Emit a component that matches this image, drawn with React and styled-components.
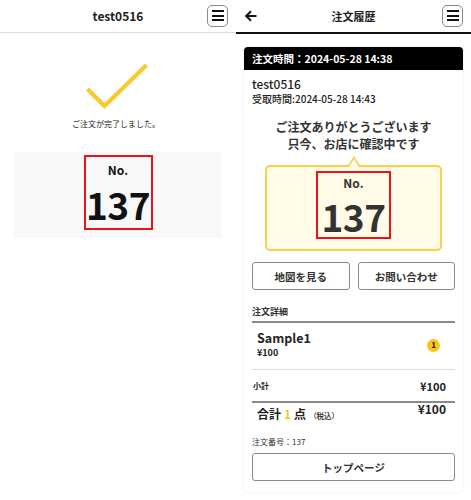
import React from "react";
import styled, { createGlobalStyle } from "styled-components";

const Global = createGlobalStyle`
  html, body { margin: 0; padding: 0; background: #fff; }
  body { font-family: "Noto Sans CJK JP", "Noto Sans", sans-serif; color: #222; }
  * { box-sizing: border-box; }
`;

const Page = styled.div`
  display: flex;
  width: 471px;
  height: 500px;
`;

const Panel = styled.div`
  width: ${(p) => p.$w}px;
  flex-shrink: 0;
  display: flex;
  flex-direction: column;
`;

const Header = styled.header`
  height: ${(p) => (p.$dark ? 34 : 33)}px;
  display: grid;
  grid-template-columns: 1fr auto 1fr;
  align-items: center;
  padding: 0 8px;
  border-bottom: ${(p) => (p.$dark ? "2px solid #111" : "1px solid #dcdcdc")};
`;

const Title = styled.h1`
  grid-column: 2;
  margin: 0;
  font-size: ${(p) => p.$size || 12}px;
  font-weight: 700;
  color: #222;
  line-height: 1;
`;

const BackButton = styled.button`
  grid-column: 1;
  justify-self: start;
  border: 0;
  background: none;
  padding: 0;
  width: 14px;
  height: 14px;
  display: flex;
`;

const MenuButton = styled.button`
  grid-column: 3;
  justify-self: end;
  width: 21px;
  height: 22px;
  border: 1px solid #888;
  border-radius: 5px;
  background: #fff;
  padding: 0;
  display: flex;
  flex-direction: column;
  align-items: center;
  justify-content: center;
  gap: 2.5px;
  margin-top: -1px;
`;

const Bar = styled.span`
  display: block;
  width: 12px;
  height: 2px;
  background: #111;
`;

const Menu = () => (
  <MenuButton>
    <Bar />
    <Bar />
    <Bar />
  </MenuButton>
);

/* left */
const Done = styled.div`
  display: flex;
  flex-direction: column;
  align-items: center;
  padding-top: 28px;
`;

const CheckSvg = styled.svg`
  display: block;
  margin-left: -2px;
`;

const DoneText = styled.p`
  margin: 7px 0 0;
  font-size: 8px;
  line-height: 12px;
  color: #222;
  margin-left: -4px;
`;

const GreyBox = styled.div`
  margin: 22px 14px 0 14px;
  height: 86px;
  background: #f8f8f8;
  display: flex;
  justify-content: center;
  padding-top: 3px;
`;

const NoBox = styled.div`
  width: ${(p) => p.$w}px;
  height: ${(p) => p.$h}px;
  border: 2px solid #e8141b;
  display: flex;
  flex-direction: column;
  align-items: center;
  color: ${(p) => p.$color};
`;

const NoLabel = styled.div`
  font-size: 12px;
  font-weight: 700;
  line-height: 14px;
  margin-top: ${(p) => p.$mt}px;
`;

const NoValue = styled.div`
  font-size: 37px;
  font-weight: 700;
  line-height: 37px;
  margin-top: ${(p) => p.$mt}px;
  letter-spacing: -0.5px;
`;

/* right */
const RightBody = styled.div`
  padding: 13px 8px 0;
`;

const Card = styled.div`
  border-radius: 4px;
  background: #fff;
  box-shadow: 0 0 3px rgba(0, 0, 0, 0.09);
  padding-bottom: 11px;
`;

const CardHead = styled.div`
  height: 23px;
  background: #000;
  color: #fff;
  border-radius: 4px 4px 0 0;
  font-size: 10.5px;
  font-weight: 700;
  display: flex;
  align-items: center;
  padding-left: 8px;
`;

const CardInner = styled.div`
  padding: 0 8px;
  display: flex;
  flex-direction: column;
`;

const Shop = styled.div`
  margin-top: 6px;
  font-size: 12px;
  font-weight: 500;
  line-height: 16px;
  color: #222;
`;

const Pickup = styled.div`
  font-size: 10px;
  font-weight: 500;
  line-height: 14px;
  color: #222;
`;

const Thanks = styled.div`
  margin-top: 12px;
  text-align: center;
  font-size: 12px;
  font-weight: 700;
  line-height: 17px;
  color: #333;
`;

const Bubble = styled.div`
  position: relative;
  margin: 13px 13px 0;
  border: 2px solid #f5d24e;
  border-radius: 5px;
  background: #fffbe6;
  display: flex;
  justify-content: center;
  padding: 4px 0 10px;

  &::before,
  &::after {
    content: "";
    position: absolute;
    left: 50%;
    transform: translateX(-50%);
    width: 0;
    height: 0;
    border-left: 7px solid transparent;
    border-right: 7px solid transparent;
  }
  &::before {
    top: -11px;
    border-bottom: 11px solid #f5d24e;
  }
  &::after {
    top: -8px;
    border-left-width: 5px;
    border-right-width: 5px;
    border-bottom: 8px solid #fffbe6;
  }
`;

const ButtonRow = styled.div`
  margin-top: 11px;
  display: grid;
  grid-template-columns: 1fr 1fr;
  gap: 8px;
`;

const OutlineButton = styled.button`
  height: 28px;
  border: 1.5px solid #8a8a8a;
  border-radius: 3px;
  background: #fff;
  font-family: inherit;
  font-size: 10.5px;
  font-weight: 700;
  color: #333;
  padding: 0;
  margin-top: ${(p) => p.$mt || 0}px;
`;

const SectionTitle = styled.div`
  margin-top: 15px;
  font-size: 9px;
  font-weight: 700;
  line-height: 14px;
  padding-bottom: 2px;
  border-bottom: 2px solid #8a8a8a;
  color: #333;
`;

const ItemRow = styled.div`
  display: flex;
  align-items: center;
  justify-content: space-between;
  padding: 7px 15px 9px 5px;
  border-bottom: 1px solid #dcdcdc;
`;

const ItemName = styled.div`
  font-size: 12.5px;
  font-weight: 700;
  line-height: 16px;
  color: #222;
`;

const ItemPrice = styled.div`
  font-size: 9px;
  font-weight: 700;
  line-height: 14px;
  color: #222;
`;

const Badge = styled.span`
  width: 13px;
  height: 13px;
  border-radius: 50%;
  background: #f7c51f;
  font-size: 8px;
  font-weight: 700;
  color: #222;
  display: flex;
  align-items: center;
  justify-content: center;
  line-height: 1;
`;

const SubRow = styled.div`
  display: flex;
  align-items: center;
  justify-content: space-between;
  height: 33px;
  padding: 0 9px 0 1px;
  border-bottom: 2px solid #8a8a8a;
`;

const SubLabel = styled.span`
  font-size: 8px;
  font-weight: 700;
  color: #222;
`;

const Price = styled.span`
  font-size: ${(p) => p.$size}px;
  font-weight: 700;
  line-height: 12px;
  color: #222;
`;

const TotalRow = styled.div`
  display: flex;
  align-items: flex-start;
  justify-content: space-between;
  padding: 0 9px 0 5px;
`;

const TotalLabel = styled.div`
  padding-top: 3px;
  font-size: 12px;
  font-weight: 700;
  line-height: 16px;
  color: #222;
`;

const Accent = styled.span`
  color: #f7c51f;
  margin: 0 3px;
`;

const Tax = styled.span`
  font-size: 7.5px;
  font-weight: 500;
  margin-left: 3px;
`;

const OrderNo = styled.div`
  margin-top: 12px;
  font-size: 8px;
  line-height: 12px;
  color: #333;
`;

export default function App() {
  return (
    <>
      <Global />
      <Page>
        <Panel $w={236}>
          <Header>
            <Title $size={12}>test0516</Title>
            <Menu />
          </Header>
          <Done>
            <CheckSvg width="64" height="50" viewBox="0 0 64 50">
              <polyline
                points="2.5,28 19.5,45 61.5,4"
                fill="none"
                stroke="#f7cb2b"
                strokeWidth="4.2"
              />
            </CheckSvg>
            <DoneText>ご注文が完了しました。</DoneText>
          </Done>
          <GreyBox>
            <NoBox $w={69} $h={75} $color="#111">
              <NoLabel $mt={6}>No.</NoLabel>
              <NoValue $mt={9}>137</NoValue>
            </NoBox>
          </GreyBox>
        </Panel>
        <Panel $w={235}>
          <Header $dark>
            <BackButton>
              <svg width="14" height="14" viewBox="0 0 14 14">
                <path
                  d="M12.5 7H2.5M7 2.2L2.2 7 7 11.8"
                  fill="none"
                  stroke="#111"
                  strokeWidth="2"
                />
              </svg>
            </BackButton>
            <Title $size={11}>注文履歴</Title>
            <Menu />
          </Header>
          <RightBody>
            <Card>
              <CardHead>注文時間：2024-05-28 14:38</CardHead>
              <CardInner>
                <Shop>test0516</Shop>
                <Pickup>受取時間:2024-05-28 14:43</Pickup>
                <Thanks>
                  ご注文ありがとうございます
                  <br />
                  只今、お店に確認中です
                </Thanks>
                <Bubble>
                  <NoBox $w={75} $h={68} $color="#333">
                    <NoLabel $mt={3}>No.</NoLabel>
                    <NoValue $mt={8}>137</NoValue>
                  </NoBox>
                </Bubble>
                <ButtonRow>
                  <OutlineButton>地図を見る</OutlineButton>
                  <OutlineButton>お問い合わせ</OutlineButton>
                </ButtonRow>
                <SectionTitle>注文詳細</SectionTitle>
                <ItemRow>
                  <div>
                    <ItemName>Sample1</ItemName>
                    <ItemPrice>¥100</ItemPrice>
                  </div>
                  <Badge>1</Badge>
                </ItemRow>
                <SubRow>
                  <SubLabel>小計</SubLabel>
                  <Price $size={11}>¥100</Price>
                </SubRow>
                <TotalRow>
                  <TotalLabel>
                    合計<Accent>1</Accent>点<Tax>（税込）</Tax>
                  </TotalLabel>
                  <Price $size={12}>¥100</Price>
                </TotalRow>
                <OrderNo>注文番号：137</OrderNo>
                <OutlineButton $mt={5}>トップページ</OutlineButton>
              </CardInner>
            </Card>
          </RightBody>
        </Panel>
      </Page>
    </>
  );
}
